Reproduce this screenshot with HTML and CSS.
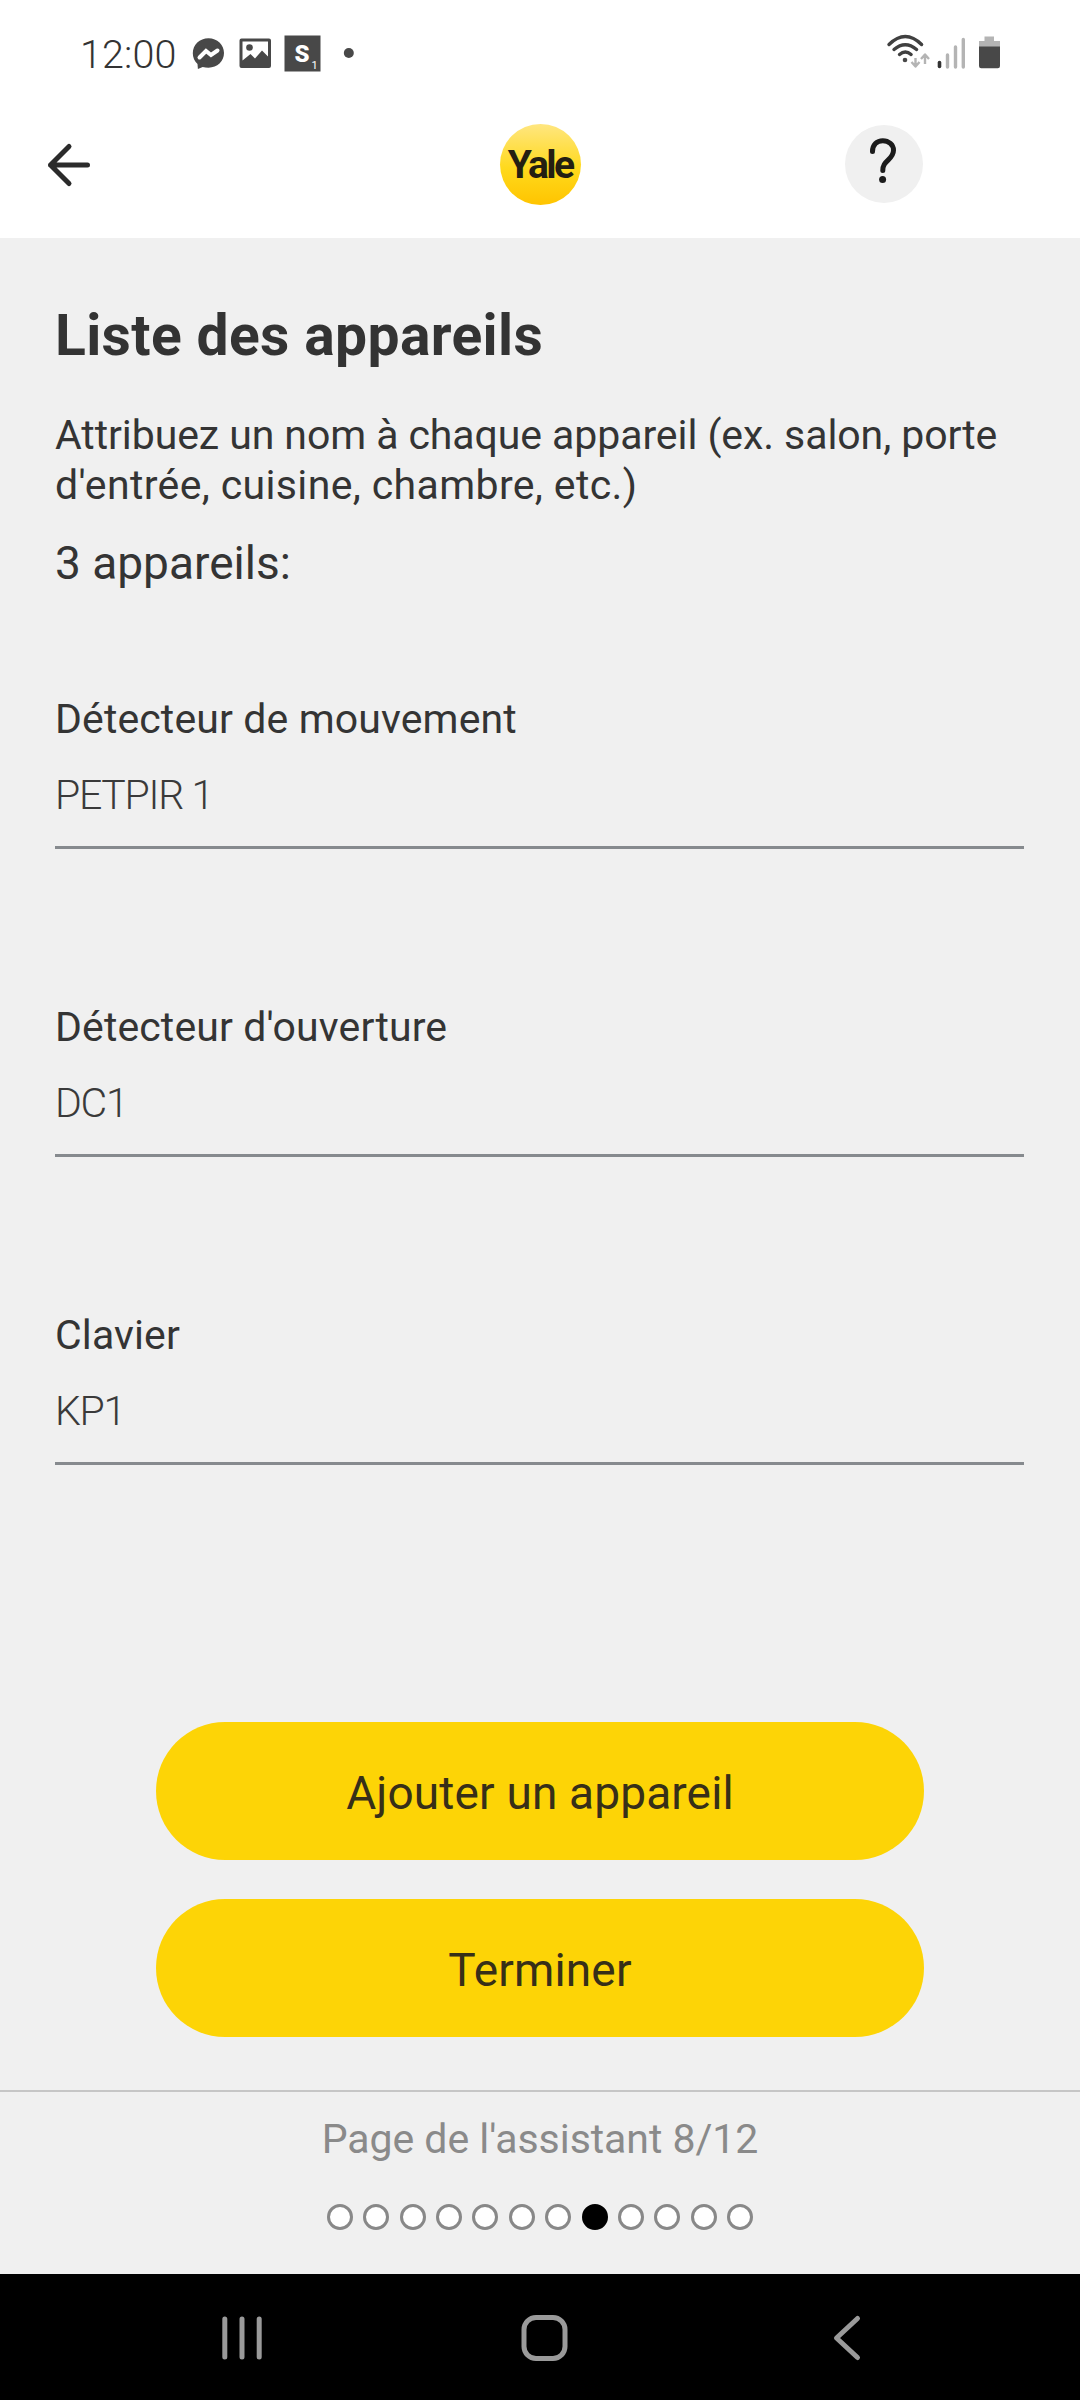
FILE: index.html
```html
<!DOCTYPE html>
<html lang="fr">
<head>
<meta charset="utf-8">
<title>Liste des appareils</title>
<link rel="stylesheet" href="styles.css">
</head>
<body>
<div class="screen">
  <div class="status-bar">
    <span class="clock">12:00</span>
    <svg class="notifications" viewBox="180 20 180 66" width="180" height="66">
      <path class="dark" d="M208.500 38.300c-8.900 0-15.700 6.500-15.700 15 0 4.200 1.700 8 4.700 10.700l.4 5 4.800-2.100c1.800.5 3.700.8 5.800.8 8.800 0 15.500-6.200 15.500-14.600 0-8.400-6.700-14.800-15.500-14.800z"/>
      <path class="bolt" d="M199.500 57.500l6.500-6.500 5 4 6.500-4.500"/>
      <path class="dark" fill-rule="evenodd" d="M241.500 38.500h27.500a2 2 0 0 1 2 2V66a2 2 0 0 1-2 2h-27.500a2 2 0 0 1-2-2V40.500a2 2 0 0 1 2-2zM242.500 41.500v19l8-6.500 4.500 4.500 7-8 6 6V41.500z"/>
      <circle class="dark" cx="249.500" cy="47.500" r="3.300"/>
      <path class="dark" d="M284.500 35.500h36v36h-36z"/>
      <text class="badge-letter" x="302" y="61.500" text-anchor="middle">S</text>
      <text class="badge-count" x="314.500" y="68.500" text-anchor="middle">1</text>
      <circle class="dark" cx="348.800" cy="53" r="5"/>
    </svg>
    <svg class="signals" viewBox="880 20 130 66" width="130" height="66">
      <g class="wifi">
        <path d="M889 44.500q16.300-16 32.600 0"/>
        <path d="M894 49.500q11.300-9.500 22.600 0"/>
        <path d="M899.500 54.500q5.800-5 11.600 0"/>
      </g>
      <circle class="dark" cx="905" cy="60" r="2.300"/>
      <path class="arrows" d="M915.500 58v8m-4-4l4 4.500 4-4.500M925 64v-8m-4 3l4-4.500 4 4.500"/>
      <path class="bar-on" d="M939.500 62.500v4"/>
      <path class="bar-off" d="M947.500 55v12M955.500 47v20M963.300 39.500V67"/>
      <path class="light" d="M984.500 36.500h9.500v4.500h6v6h-21v-6h5.500z"/>
      <path class="dark" d="M979 46.500h21V66a2.200 2.200 0 0 1-2.200 2.200h-16.600A2.200 2.200 0 0 1 979 66z"/>
    </svg>
  </div>

  <header class="app-bar">
    <svg class="back" viewBox="0 0 46 46" width="46" height="46"><path d="M23 4.500L4.500 23 23 41.500M4.500 23h37"/></svg>
    <div class="logo"><span>Yale</span></div>
    <div class="help">
      <svg viewBox="0 0 78 78" width="78" height="78"><path d="M27.500 26.500c0-7 4.400-10.800 10.300-10.800s10.700 4.200 10.700 9.600c0 4.500-2.300 6.800-5.200 9.600-3.500 3.300-5.500 5.300-5.500 10.600"/><circle cx="37.600" cy="54.500" r="3.500"/></svg>
    </div>
  </header>

  <main class="content">
    <h1>Liste des appareils</h1>
    <p class="intro">Attribuez un nom à chaque appareil (ex. salon, porte<br><span class="second">d'entrée, cuisine, chambre, etc.)</span></p>
    <p class="count">3 appareils:</p>
    <div class="fields">
      <div class="field"><div class="label">Détecteur de mouvement</div><div class="value">PETPIR 1</div></div>
      <div class="field"><div class="label">Détecteur d'ouverture</div><div class="value">DC1</div></div>
      <div class="field"><div class="label">Clavier</div><div class="value">KP1</div></div>
    </div>
    <div class="actions">
      <button>Ajouter un appareil</button>
      <button>Terminer</button>
    </div>
  </main>

  <footer class="wizard">
    <div class="page">Page de l'assistant 8/12</div>
    <div class="dots"><i></i><i></i><i></i><i></i><i></i><i></i><i></i><i class="current"></i><i></i><i></i><i></i><i></i></div>
  </footer>

  <nav class="system-nav">
    <svg viewBox="0 0 50 50" width="50" height="50"><path d="M7.800 6v38M25 6v38M42.200 6v38"/></svg>
    <svg viewBox="0 0 50 50" width="50" height="50"><rect x="4" y="4.500" width="41" height="41" rx="12"/></svg>
    <svg viewBox="0 0 50 50" width="50" height="50"><path d="M34.500 5.500L13.500 25l21 19.500"/></svg>
  </nav>
</div>
</body>
</html>
```
FILE: styles.css
```css
* { box-sizing: border-box; margin: 0; padding: 0; }
body { background: #f0f0f0; font-family: Roboto, "Liberation Sans", sans-serif; color: #343434; }
svg { display: block; flex: none; fill: none; stroke-linecap: round; stroke-linejoin: round; }
.screen { width: 1080px; height: 2400px; display: flex; flex-direction: column; }

.status-bar { height: 106px; padding: 20px 70px 0 80px; background: #fff; display: flex; align-items: flex-start; }
.clock { width: 100px; font-size: 39.500px; line-height: 70px; letter-spacing: .1px; font-weight: 300; color: #333; }
.signals { margin-left: auto; }
.dark { fill: #484848; }
.light { fill: #b4b4b4; }
.bolt { stroke: #fff; stroke-width: 4; stroke-linejoin: miter; }
.badge-letter { fill: #fff; font-size: 24px; font-weight: 900; }
.badge-count { fill: #fff; font-size: 11px; }
.wifi { stroke: #404040; stroke-width: 3.4; }
.arrows { stroke: #b4b4b4; stroke-width: 2.4; stroke-linecap: butt; }
.bar-on { stroke: #333; stroke-width: 3.6; }
.bar-off { stroke: #b4b4b4; stroke-width: 3.4; }

.app-bar { height: 132px; padding: 18px 157px 0 46px; background: #fff; display: grid; grid-template-columns: 454px 1fr 78px; align-items: start; }
.back { margin-top: 18px; stroke: #2b2b2b; stroke-width: 5; }
.logo { width: 81px; height: 81px; border-radius: 50%; background: linear-gradient(#ffe680, #ffd91c 55%, #ffc400); display: flex; justify-content: center; }
.logo span { font-size: 39px; line-height: 82px; font-weight: 700; letter-spacing: -2.600px; color: #241f12; margin-right: 1px; }
.help { width: 78px; height: 78px; margin-top: 1px; border-radius: 50%; background: #f0f0f0; }
.help path { stroke: #1c1c1c; stroke-width: 5; }
.help circle { fill: #1c1c1c; }

.content { flex: 1; padding: 64px 56px 0 55px; }
h1 { font-size: 57px; line-height: 68px; font-weight: 700; letter-spacing: .35px; color: #333; }
.intro { margin-top: 40px; font-size: 41px; line-height: 50px; letter-spacing: -.08px; white-space: nowrap; }
.second { letter-spacing: .36px; }
.count { margin-top: 25px; font-size: 46px; line-height: 56px; letter-spacing: 0; }
.fields { margin-top: 103px; display: grid; gap: 153px; }
.field { height: 155px; border-bottom: 3px solid #868a8e; font-size: 41px; line-height: 50px; }
.label { letter-spacing: .12px; }
.value { margin-top: 26px; font-weight: 300; letter-spacing: -1.300px; color: #3a3a3a; }
.actions { margin: 257px 100px 0 101px; display: grid; gap: 39px; }
button { height: 138px; padding-top: 4px; border: 0; border-radius: 69px; background: #fdd406; color: #372f18; font: 400 46px/56px Roboto, "Liberation Sans", sans-serif; letter-spacing: .15px; }

.wizard { height: 184px; padding-top: 22px; border-top: 2px solid #c6c6c6; display: flex; flex-direction: column; align-items: center; gap: 40px; }
.page { font-size: 41px; line-height: 50px; letter-spacing: -.05px; color: #8a8a8a; }
.dots { display: flex; gap: 10.400px; }
.dots i { width: 26px; height: 26px; border: 3px solid #888; border-radius: 50%; background: #fff; }
.dots .current { border-color: #000; background: #000; }

.system-nav { height: 126px; padding: 39px 207px 0 217px; background: #000; display: flex; justify-content: space-between; }
.system-nav svg { stroke: #9a9a9a; stroke-width: 5; }
```
